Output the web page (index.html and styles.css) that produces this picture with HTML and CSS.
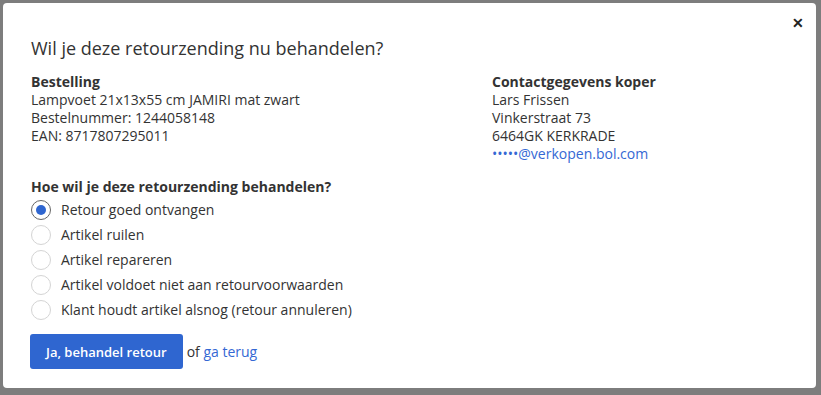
FILE: index.html
```html
<!DOCTYPE html>
<html>
<head>
  <title>Retour behandelen</title>
  <link rel="stylesheet" href="styles.css">
</head>
<body>
  <div class="modal">
    <span class="close">&#x2715;</span>
    <h1 class="title">Wil je deze retourzending nu behandelen?</h1>

    <div class="details">
      <div class="block">
        <div class="label">Bestelling</div>
        <div>Lampvoet 21x13x55 cm JAMIRI mat zwart</div>
        <div>Bestelnummer: 1244058148</div>
        <div>EAN: 8717807295011</div>
      </div>
      <div class="block">
        <div class="label">Contactgegevens koper</div>
        <div>Lars Frissen</div>
        <div>Vinkerstraat 73</div>
        <div>6464GK KERKRADE</div>
        <a class="link" href="#">&bull;&bull;&bull;&bull;&bull;@verkopen.bol.com</a>
      </div>
    </div>

    <div class="label">Hoe wil je deze retourzending behandelen?</div>
    <ul class="options">
      <li class="option selected"><span class="radio"></span>Retour goed ontvangen</li>
      <li class="option"><span class="radio"></span>Artikel ruilen</li>
      <li class="option"><span class="radio"></span>Artikel repareren</li>
      <li class="option"><span class="radio"></span>Artikel voldoet niet aan retourvoorwaarden</li>
      <li class="option"><span class="radio"></span>Klant houdt artikel alsnog (retour annuleren)</li>
    </ul>

    <div class="actions">
      <button class="button">Ja, behandel retour</button>
      <span>of <a class="link" href="#">ga terug</a></span>
    </div>
  </div>
</body>
</html>
```

FILE: styles.css
```css
body {
  margin: 0;
  background: #7d7d7d;
  font-family: "Open Sans", Arial, sans-serif;
  font-size: 14px;
  line-height: 18px;
  color: #333;
}

.modal {
  position: relative;
  margin: 3px 5px 7px 3px;
  height: 385px;
  box-sizing: border-box;
  padding: 33px 28px 18px 28px;
  background: #fff;
  border-radius: 4px;
}

.close {
  position: absolute;
  top: 11px;
  right: 12px;
  font-size: 14px;
  font-weight: bold;
  color: #222;
}

.title {
  margin: 0;
  font-size: 18px;
  line-height: 24px;
  font-weight: normal;
}

.details {
  display: grid;
  grid-template-columns: 461px 1fr;
  margin-top: 13px;
  margin-bottom: 15px;
}

.label {
  font-weight: bold;
}

.link {
  color: #3468d4;
  text-decoration: none;
}

.options {
  list-style: none;
  margin: 1px 0 0 0;
  padding: 0;
}

.option {
  display: flex;
  align-items: center;
  gap: 10px;
  height: 25px;
}

.radio {
  width: 18px;
  height: 18px;
  border: 1px solid #d4d4d4;
  border-radius: 50%;
  display: flex;
  align-items: center;
  justify-content: center;
}

.option.selected .radio {
  border-color: #666;
}

.option.selected .radio::after {
  content: "";
  width: 10px;
  height: 10px;
  border-radius: 50%;
  background: #2f66d0;
}

.actions {
  display: flex;
  align-items: center;
  gap: 4px;
  margin-top: 12px;
}

.button {
  height: 35px;
  margin-left: -1px;
  padding: 0 16px;
  border: none;
  border-radius: 3px;
  background: #2f66d0;
  color: #fff;
  font-family: inherit;
  font-size: 13px;
  font-weight: 600;
}
```
